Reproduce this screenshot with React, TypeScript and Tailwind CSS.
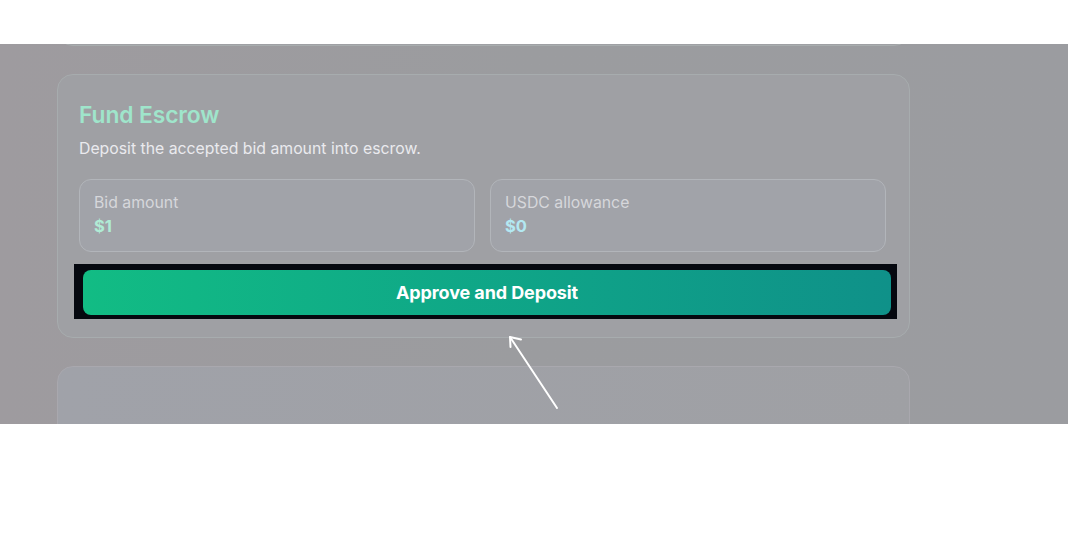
import React from "react";

const stats = [
  { label: "Bid amount", value: "$1", tone: "text-[#b0ebd5]" },
  { label: "USDC allowance", value: "$0", tone: "text-[#b3e8f2]" },
];

function Arrow() {
  return (
    <svg
      className="absolute left-0 top-0 pointer-events-none"
      width="1068"
      height="380"
      viewBox="0 0 1068 380"
      fill="none"
    >
      <g stroke="#ffffff" strokeWidth="2" strokeLinecap="round" strokeLinejoin="round">
        <path d="M557 364 L510 293" />
        <path d="M521 295.5 L510 293 L510.5 303" />
      </g>
    </svg>
  );
}

export default function App() {
  return (
    <div
      className="w-[1068px] h-[557px] bg-white overflow-hidden"
      style={{ fontFamily: "Inter, 'Noto Sans', sans-serif" }}
    >
      <div className="h-[44px]" />

      {/* dimmed screenshot region */}
      <div className="relative h-[380px] overflow-hidden bg-gradient-to-r from-[#9e9b9f] via-[#9b9c9f] to-[#9b9ca0]">
        <div className="flex flex-col gap-7 pl-[57px]">
          {/* previous card, only its bottom edge shows */}
          <div className="w-[853px] h-[100px] -mt-[98px] rounded-2xl border border-[#a8adae] bg-[#9fa0a4]" />

          {/* Fund Escrow card */}
          <div className="w-[853px] h-[264px] rounded-2xl border border-[#a7acae] bg-[#9fa0a4] px-[21px] pt-[26px]">
            <h2 className="text-[22.8px] leading-[28px] font-semibold text-[#9fe5cb] tracking-[-0.1px]">
              Fund Escrow
            </h2>
            <p className="mt-[10px] text-[15.8px] leading-5 text-[#eaeaee]">
              Deposit the accepted bid amount into escrow.
            </p>

            <div className="mt-[20px] grid grid-cols-2 gap-[15px] w-[807px]">
              {stats.map((s) => (
                <div
                  key={s.label}
                  className="h-[73px] rounded-xl border border-[#b2b5ba] bg-[#a1a3a9] px-[14px] pt-[13px]"
                >
                  <div className="text-[15.8px] leading-5 text-[#d6d7db]">{s.label}</div>
                  <div className={`mt-[1px] text-[16.5px] leading-6 font-bold ${s.tone}`}>
                    {s.value}
                  </div>
                </div>
              ))}
            </div>

            {/* highlighted action */}
            <div className="mt-[12px] -ml-[5px] w-[823px] h-[55px] bg-[#05080f] pl-[9px] pr-[6px] pt-[6px] pb-[4px]">
              <button className="w-full h-full rounded-lg bg-gradient-to-r from-[#12bc84] to-[#0f9189] text-white text-[18px] font-bold tracking-[-0.1px]">
                Approve and Deposit
              </button>
            </div>
          </div>

          {/* next card */}
          <div className="w-[853px] h-[200px] rounded-2xl border border-[#a9a8ae] bg-gradient-to-r from-[#a0a2a9] to-[#9fa0a4]" />
        </div>

        <Arrow />
      </div>
    </div>
  );
}
